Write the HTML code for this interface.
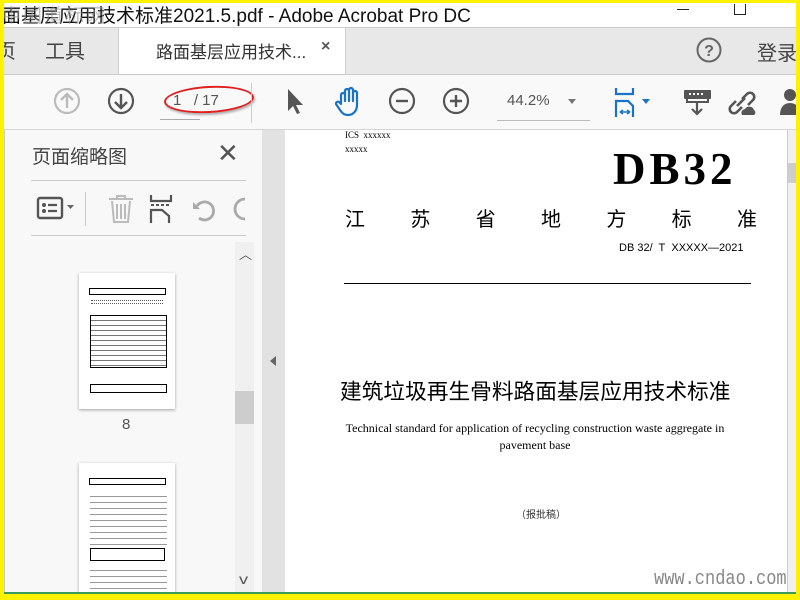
<!DOCTYPE html>
<html><head><meta charset="utf-8"><style>
*{margin:0;padding:0;box-sizing:border-box}
body{width:800px;height:600px;overflow:hidden;background:#fff200;position:relative;font-family:"Liberation Sans","Noto Sans CJK SC",sans-serif}
.a{position:absolute;white-space:nowrap}
.ic{position:absolute}
</style></head><body>
<div class="a" style="left:4px;top:3px;width:792px;height:591px;background:#fff;overflow:hidden">
 <div class="a" style="left:-2px;top:-2px;font-size:19px;color:#111;white-space:nowrap">面基层应用技术标准2021.5.pdf - Adobe Acrobat Pro DC</div>
 <div class="a" style="left:-2px;top:-2px;font-size:19px;color:rgba(150,150,150,.6);white-space:nowrap;letter-spacing:2px">中国道标网</div>
 <div class="a" style="left:673px;top:6px;width:12px;height:1px;background:#222"></div>
 <div class="a" style="left:730px;top:1px;width:12px;height:11px;border:1px solid #222;border-top:none"></div>
 <div class="a" style="left:0;top:24px;width:792px;height:1px;background:#ccc"></div>
 <div class="a" style="left:0;top:25px;width:792px;height:46px;background:#e8e8e8"></div>
 <div class="a" style="left:114px;top:25px;width:228px;height:47px;background:#fff;border-left:1px solid #d0d0d0;border-right:1px solid #d0d0d0"></div>
 <div class="a" style="left:-8px;top:32px;font-size:20px;color:#444">页</div>
 <div class="a" style="left:41px;top:32px;font-size:20px;color:#444">工具</div>
 <div class="a" style="left:152px;top:35px;font-size:17px;color:#333">路面基层应用技术...</div>
 <div class="a" style="left:317px;top:35px;font-size:16px;color:#555;font-weight:bold">×</div>
 <svg class="ic" style="left:692px;top:34px" width="26" height="26"><circle cx="13" cy="13" r="11.5" fill="none" stroke="#666" stroke-width="2"/><text x="13" y="19" font-size="16" font-weight="bold" text-anchor="middle" fill="#666" font-family="Liberation Sans">?</text></svg>
 <div class="a" style="left:753px;top:34px;font-size:20px;color:#444">登录</div>
 <div class="a" style="left:0;top:71px;width:792px;height:1px;background:#ccc"></div>
 <div class="a" style="left:0;top:72px;width:792px;height:55px;background:#f9f9f9"></div>
 <div class="a" style="left:0;top:126px;width:792px;height:1px;background:#d5d5d5"></div>
 <svg class="ic" style="left:49px;top:84px" width="28" height="28"><circle cx="14" cy="14" r="12" fill="none" stroke="#bbb" stroke-width="2.2"/><path d="M14 21V8M8 13l6-6 6 6" fill="none" stroke="#bbb" stroke-width="2.4"/></svg>
 <svg class="ic" style="left:103px;top:84px" width="28" height="28"><circle cx="14" cy="14" r="12" fill="none" stroke="#555" stroke-width="2.2"/><path d="M14 7v13M8 15l6 6 6-6" fill="none" stroke="#555" stroke-width="2.4"/></svg>
 <div class="a" style="left:156px;top:116px;width:40px;height:1px;background:#aaa"></div>
 <div class="a" style="left:169px;top:89px;font-size:15px;color:#555">1&nbsp;&nbsp;&nbsp;/ 17</div>
 <div class="a" style="left:160px;top:83px;width:90px;height:27px;border:2.5px solid #e02020;border-radius:50%;transform:rotate(-3deg);box-shadow:1px 2px 2px rgba(0,0,0,.3)"></div>
 <div class="a" style="left:247px;top:80px;width:1px;height:40px;background:#ccc"></div>
 <svg class="ic" style="left:280px;top:84px" width="20" height="28"><path d="M4 2v22l5-5 4 8 3-1-4-8h7z" fill="#555"/></svg>
 <svg class="ic" style="left:329px;top:83px" width="32" height="32"><path d="M8 18V9a2 2 0 0 1 4 0v6V5a2 2 0 0 1 4 0v10V4a2 2 0 0 1 4 0v11V7a2 2 0 0 1 4 0v12c0 6-4 10-9 10-4 0-6-2-8-5l-4-6a2 2 0 0 1 3-2z" fill="none" stroke="#1a73c8" stroke-width="2.2" stroke-linejoin="round"/></svg>
 <svg class="ic" style="left:384px;top:84px" width="28" height="28"><circle cx="14" cy="14" r="12" fill="none" stroke="#555" stroke-width="2.2"/><path d="M8 14h12" stroke="#555" stroke-width="2.4"/></svg>
 <svg class="ic" style="left:438px;top:84px" width="28" height="28"><circle cx="14" cy="14" r="12" fill="none" stroke="#555" stroke-width="2.2"/><path d="M8 14h12M14 8v12" stroke="#555" stroke-width="2.4"/></svg>
 <div class="a" style="left:503px;top:89px;font-size:15px;color:#555">44.2%</div>
 <div class="a" style="left:564px;top:96px;border:4px solid transparent;border-top:5px solid #777"></div>
 <div class="a" style="left:493px;top:117px;width:93px;height:1px;background:#bbb"></div>
 <svg class="ic" style="left:610px;top:84px" width="36" height="32"><path d="M2 1v6h17V1" fill="none" stroke="#1a73c8" stroke-width="2.2"/><path d="M2 30V14h12l5 5v11" fill="none" stroke="#1a73c8" stroke-width="2.2"/><path d="M6 25h10M6 25l3-2M6 25l3 2M16 25l-3-2M16 25l-3 2" stroke="#1a73c8" stroke-width="1.4" fill="none"/><path d="M28 12h8l-4 5z" fill="#1a73c8"/></svg>
 <svg class="ic" style="left:679px;top:86px" width="30" height="28"><rect x="1" y="1" width="27" height="9" rx="1" fill="#555"/><path d="M6 5h2M10 5h2M14 5h2M18 5h2" stroke="#fff" stroke-width="2"/><path d="M4 10v3h21v-3" fill="none" stroke="#555" stroke-width="2"/><path d="M14 12v13M9 20l5 5 5-5" fill="none" stroke="#555" stroke-width="2.2"/></svg>
 <svg class="ic" style="left:722px;top:84px" width="32" height="30"><path d="M10 14l-5 5a4 4 0 0 0 6 6l5-5M16 12l5-5a4 4 0 0 1 6 6l-5 5M11 19l8-8" fill="none" stroke="#555" stroke-width="2.6"/><path d="M16 28a4 4 0 0 1 3-6a5 5 0 0 1 9 1a3 3 0 0 1 0 5z" fill="#555"/></svg>
 <svg class="ic" style="left:776px;top:84px" width="20" height="30"><circle cx="10" cy="8" r="6" fill="#555"/><path d="M0 28c0-8 4-12 10-12s10 4 10 12z" fill="#555"/></svg>
 <div class="a" style="left:0;top:127px;width:258px;height:464px;background:#f8f8f8;border-left:1px solid #ccc"></div>
 <div class="a" style="left:28px;top:139px;font-size:19px;color:#444">页面缩略图</div>
 <div class="a" style="left:213px;top:135px;font-size:26px;color:#555">✕</div>
 <div class="a" style="left:27px;top:177px;width:215px;height:1px;background:#ccc"></div>
 <svg class="ic" style="left:28px;top:192px" width="46" height="26"><rect x="6" y="3" width="24" height="20" rx="2" fill="none" stroke="#555" stroke-width="2.4"/><circle cx="12" cy="10" r="2" fill="#555"/><circle cx="12" cy="16" r="2" fill="#555"/><path d="M16 10h9M16 16h9" stroke="#555" stroke-width="2.2"/><path d="M35 10h7l-3.5 4z" fill="#666"/></svg>
 <div class="a" style="left:81px;top:189px;width:1px;height:34px;background:#ccc"></div>
 <svg class="ic" style="left:103px;top:191px" width="28" height="30"><path d="M2 5h24M10 5V2h8v3M5 7l2 21h14l2-21M10 10v15M14 10v15M18 10v15" fill="none" stroke="#bbb" stroke-width="2"/></svg>
 <svg class="ic" style="left:145px;top:191px" width="26" height="30"><path d="M2 1v6h20V1" fill="none" stroke="#555" stroke-width="2.2"/><path d="M2 11h3M7 11h3M12 11h3M17 11h3" stroke="#555" stroke-width="2"/><path d="M2 29V16h11l7 6v7" fill="none" stroke="#555" stroke-width="2.2"/></svg>
 <svg class="ic" style="left:187px;top:193px" width="28" height="26"><path d="M6 10a9 9 0 1 1 2 12" fill="none" stroke="#aaa" stroke-width="2.8"/><path d="M2 6l7 7H2z" fill="#aaa"/></svg>
 <svg class="ic" style="left:228px;top:193px" width="14" height="26"><path d="M13 3a10 10 0 0 0 0 20" fill="none" stroke="#aaa" stroke-width="2.8"/></svg>
 <div class="a" style="left:27px;top:232px;width:215px;height:1px;background:#ccc"></div>
 <div class="a" style="left:231px;top:239px;width:19px;height:352px;background:#f0f0f0"></div>
 <div class="a" style="left:231px;top:388px;width:19px;height:33px;background:#cdcdcd"></div>
 <div class="a" style="left:235px;top:241px;font-size:13px;color:#555">︿</div>
 <div class="a" style="left:236px;top:568px;font-size:14px;color:#555;transform:scaleX(1.3)">v</div>
 <div class="a" style="left:75px;top:270px;width:96px;height:136px;background:#fff;box-shadow:0 1px 3px rgba(0,0,0,.35);overflow:hidden">
  <div class="a" style="left:10px;top:15px;width:77px;height:7px;border:1px solid #000"></div>
  <div class="a" style="left:12px;top:27px;width:72px;height:4px;border-top:1px dotted #555;border-bottom:1px dotted #555"></div>
  <div class="a" style="left:11px;top:42px;width:77px;height:53px;border:1px solid #000;background:repeating-linear-gradient(#fff 0 4px,#777 4px 5px)"></div>
  <div class="a" style="left:11px;top:111px;width:77px;height:9px;border:1px solid #000"></div>
 </div>
 <div class="a" style="left:118px;top:413px;font-size:15px;color:#555">8</div>
 <div class="a" style="left:75px;top:460px;width:96px;height:131px;background:#fff;box-shadow:0 1px 3px rgba(0,0,0,.35);overflow:hidden">
  <div class="a" style="left:10px;top:15px;width:77px;height:7px;border:1px solid #000"></div>
  <div class="a" style="left:11px;top:28px;width:77px;height:55px;background:repeating-linear-gradient(#fff 0 5px,#999 5px 6px)"></div>
  <div class="a" style="left:11px;top:85px;width:75px;height:13px;border:1px solid #000"></div>
  <div class="a" style="left:11px;top:102px;width:77px;height:25px;background:repeating-linear-gradient(#fff 0 5px,#999 5px 6px)"></div>
 </div>
 <div class="a" style="left:258px;top:127px;width:23px;height:464px;background:#e2e2e2"></div>
 <div class="a" style="left:266px;top:353px;border:5px solid transparent;border-right:6px solid #666;border-left:none"></div>
 <div class="a" style="left:281px;top:127px;width:502px;height:464px;background:#fff"></div>
 <div class="a" style="left:341px;top:127px;font:9px 'Liberation Serif',serif;color:#000">ICS&nbsp; xxxxxx</div>
 <div class="a" style="left:341px;top:141px;font:9px 'Liberation Serif',serif;color:#000">xxxxx</div>
 <div class="a" style="left:609px;top:140px;font:bold 45px 'Liberation Serif',serif;color:#000;letter-spacing:4px">DB32</div>
 <div class="a" style="left:341px;top:200px;width:412px;display:flex;justify-content:space-between;font:20px 'Noto Sans CJK SC',sans-serif;color:#000"><span>江</span><span>苏</span><span>省</span><span>地</span><span>方</span><span>标</span><span>准</span></div>
 <div class="a" style="left:615px;top:239px;font-size:11px;color:#000">DB 32/&nbsp; T&nbsp; XXXXX—2021</div>
 <div class="a" style="left:340px;top:280px;width:407px;height:1px;background:#000"></div>
 <div class="a" style="left:336px;top:372px;font:21.7px 'Noto Sans CJK SC',sans-serif;color:#000">建筑垃圾再生骨料路面基层应用技术标准</div>
 <div class="a" style="left:341px;top:417px;width:380px;text-align:center;white-space:normal;font:12px/17px 'Liberation Serif',serif;color:#000">Technical standard for application of recycling construction waste aggregate in pavement base</div>
 <div class="a" style="left:512px;top:503px;font-size:10px;color:#333">（报批稿）</div>
 <div class="a" style="left:650px;top:565px;font:20px 'Liberation Mono',monospace;color:#888;transform:scaleX(.85);transform-origin:left">www.cndao.com</div>
 <div class="a" style="left:783px;top:127px;width:9px;height:464px;background:#f0f0f0;border-left:1px solid #ccc"></div>
 <div class="a" style="left:784px;top:160px;width:8px;height:20px;background:#cdcdcd"></div>
 <div class="a" style="left:0;top:589px;width:792px;height:2px;background:#3a9a5a"></div>
</div>
</body></html>
